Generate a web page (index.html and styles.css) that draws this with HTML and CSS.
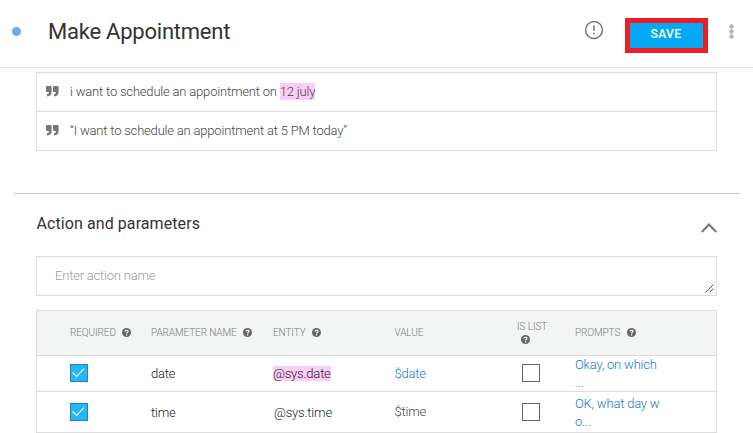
FILE: index.html
```html
<!DOCTYPE html>
<html lang="en">
<head>
<meta charset="utf-8">
<title>Make Appointment</title>
<link rel="stylesheet" href="styles.css">
</head>
<body>
<svg width="0" height="0" class="defs">
  <symbol id="help" viewBox="0 0 9 9"><circle cx="4.5" cy="4.5" r="4.5" fill="#666"/><path d="M3 3.6C3 1.8 6 1.8 6 3.4C6 4.4 4.6 4.3 4.6 5.5M4.6 6.3V7.4" fill="none" stroke="#fff" stroke-width="1.2"/></symbol>
  <symbol id="quote" viewBox="0 0 13 11"><path d="M0 1Q0 0 1 0H4.6Q5.6 0 5.6 1V6Q5.6 10.4 1 10.4V8.3Q3 8.3 3 6H1Q0 6 0 5ZM7 1Q7 0 8 0H11.6Q12.6 0 12.6 1V6Q12.6 10.4 8 10.4V8.3Q10 8.3 10 6H8Q7 6 7 5Z" fill="#777"/></symbol>
  <symbol id="tick" viewBox="0 0 18 18"><path d="M2.5 8.5L6.7 12.5L14 4.5" fill="none" stroke="#fff" stroke-width="1.1"/></symbol>
</svg>
<header class="header">
  <span class="status"></span>
  <h1 class="title">Make Appointment</h1>
  <svg class="alert" width="20" height="20" viewBox="0 0 20 20"><circle cx="10" cy="10" r="8.4" fill="none" stroke="#777" stroke-width="1.5"/><path d="M10 5.2V11M10 12.8V14.5" stroke="#777" stroke-width="1.5"/></svg>
  <button class="save">SAVE</button>
  <svg class="more" width="5" height="15" viewBox="0 0 5 15"><g fill="#b4b5bd"><circle cx="2.5" cy="2.5" r="2.2"/><circle cx="2.5" cy="7.5" r="2.2"/><circle cx="2.5" cy="12.5" r="2.2"/></g></svg>
</header>
<main>
  <ul class="phrases">
    <li><svg class="quote"><use href="#quote"/></svg><span class="phrase">i want to schedule an appointment on <mark>12 july</mark></span></li>
    <li><svg class="quote"><use href="#quote"/></svg><span class="phrase">“I want to schedule an appointment at 5 PM today”</span></li>
  </ul>
  <hr class="divider">
  <div class="section-head">
    <h2>Action and parameters</h2>
    <svg class="chevron" width="16" height="10" viewBox="0 0 16 10"><path d="M0.7 9L8 1.5L15.3 9" fill="none" stroke="#777" stroke-width="2"/></svg>
  </div>
  <div class="action"><span>Enter action name</span>
    <svg class="grip" width="9" height="9" viewBox="0 0 9 9"><path d="M0.5 8.5L8.5 0.5M4.5 8.5L8.5 4.5" stroke="#555" stroke-width="1"/></svg>
  </div>
  <section class="params">
    <div class="row head">
      <div>REQUIRED<svg class="help"><use href="#help"/></svg></div>
      <div>PARAMETER NAME<svg class="help"><use href="#help"/></svg></div>
      <div>ENTITY<svg class="help"><use href="#help"/></svg></div>
      <div>VALUE</div>
      <div class="stacked">IS LIST<svg class="help"><use href="#help"/></svg></div>
      <div>PROMPTS<svg class="help"><use href="#help"/></svg></div>
    </div>
    <div class="row date">
      <div><span class="box on"><svg><use href="#tick"/></svg></span></div>
      <div class="name">date</div>
      <div><mark>@sys.date</mark></div>
      <div class="link">$date</div>
      <div class="list"><span class="box"></span></div>
      <div class="link prompt">Okay, on which<br>...</div>
    </div>
    <div class="row time">
      <div><span class="box on"><svg><use href="#tick"/></svg></span></div>
      <div class="name">time</div>
      <div class="entity">@sys.time</div>
      <div class="value">$time</div>
      <div class="list"><span class="box"></span></div>
      <div class="link prompt">OK, what day w<br>o...</div>
    </div>
  </section>
</main>
</body>
</html>
```

FILE: styles.css
```css
* { box-sizing: border-box; }
body { margin: 0; background: #fff; font-family: Roboto, "Liberation Sans", sans-serif; font-weight: 300; font-size: 13px; letter-spacing: -0.2px; color: #222; overflow: hidden; }
.defs { display: block; }
svg { flex: none; }
mark { background: #fdcdf7; color: inherit; }
.header { height: 68px; border-bottom: 1px solid #e4e4e4; display: flex; align-items: flex-start; }
.status { width: 9px; height: 9px; border-radius: 50%; background: #67aeea; margin: 27px 0 0 12px; flex: none; }
.title { margin: 18px 0 0 27px; font-size: 22px; line-height: 28px; font-weight: 400; letter-spacing: -0.23px; color: #333; width: 536px; white-space: nowrap; }
.alert { margin-top: 20px; }
.save { margin: 18px 0 0 21px; width: 83px; height: 35px; border: 5px solid #ee1c25; background: #03a9f4; color: #fff; font: 500 12px/20px Roboto, sans-serif; letter-spacing: 0.4px; padding: 0 1px 4px 0; }
.more { margin: 24px 0 0 21px; }
main { padding: 4px 36px 0; }
.phrases { list-style: none; margin: 0; padding: 0; width: 681px; border: 1px solid #ddd; }
.phrases li { height: 38px; display: flex; align-items: center; padding-bottom: 2px; }
.phrases li + li { height: 39px; border-top: 1px solid #ddd; }
.quote { width: 13px; height: 11px; margin-left: 9px; }
.phrase { margin-left: 11px; color: #444; letter-spacing: -0.19px; white-space: nowrap; }
.phrase mark { padding: 1px 0; }
.divider { margin: 42px -23px 0 -22px; border: 0; height: 1px; background: #c8c8c8; }
.section-head { height: 62px; width: 681px; display: flex; justify-content: space-between; }
h2 { margin: 19px 0 0 0.5px; font-size: 16px; line-height: 22px; font-weight: 400; letter-spacing: 0.08px; color: #333; }
.chevron { margin-top: 29px; }
.action { width: 681px; height: 40px; border: 1px solid #ddd; display: flex; justify-content: space-between; align-items: center; padding: 0 0 1px 18px; color: #999ca2; }
.grip { align-self: flex-end; margin: 0 2px 1px 0; }
.params { margin-top: 14px; width: 681px; border: 1px solid #ddd; }
.row { display: grid; grid-template-columns: 81px 122px 121.5px 122.5px 58px 1fr; grid-template-rows: 100%; padding-left: 33px; }
.row > div { display: flex; align-items: center; white-space: nowrap; }
.head { height: 45px; background: #f3f5f4; border-bottom: 1px solid #ddd; font-size: 10px; letter-spacing: -0.1px; color: #777b80; padding-bottom: 1px; }
.help { width: 9px; height: 9px; margin-left: 6.5px; }
.head .stacked { flex-direction: column; align-items: flex-start; justify-content: center; line-height: 13px; padding-bottom: 2px; }
.stacked .help { margin: 2px 0 0 4px; }
.date { height: 36px; border-bottom: 1px solid #ddd; }
.row.date > div { padding-bottom: 1px; }
.time { height: 40px; }
.row.time > .value { padding-bottom: 2px; color: #444; }
.entity { padding-left: 1px; }
.box { width: 18px; height: 18px; border: 1px solid #666; background: #fff; }
.box.on { background: #29b6f6; border-color: #1c86b8; }
.box svg { display: block; width: 18px; height: 18px; margin: -1px; }
.list { padding-left: 5px; }
.link { color: #1976d2; }
.row > .prompt { display: block; line-height: 18px; }
.time > .prompt { padding-top: 3px; }
```
